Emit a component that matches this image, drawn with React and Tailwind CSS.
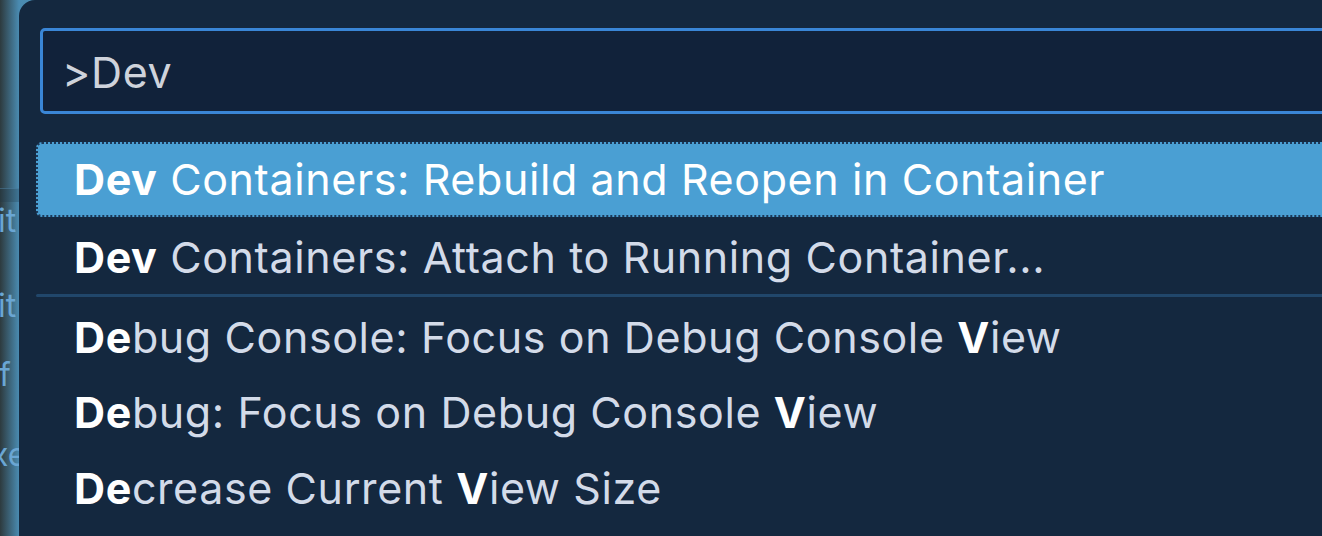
import React from 'react';

// command palette rows; each part is [text, bold]
const rows = [
    { parts: [['Dev', true], [' Containers: Rebuild and Reopen in Container', false]], h: 'h-[75px]', selected: true },
    { parts: [['Dev', true], [' Containers: Attach to Running Container...', false]], h: 'h-[77px] pt-[3px]' },
    { sep: true },
    { parts: [['De', true], ['bug Console: Focus on Debug Console ', false], ['V', true], ['iew', false]], h: 'h-[78px] pt-[2px]' },
    { parts: [['De', true], ['bug: Focus on Debug Console ', false], ['V', true], ['iew', false]], h: 'h-[74px]' },
    { parts: [['De', true], ['crease Current ', false], ['V', true], ['iew Size', false]], h: 'h-[76px] pt-[2px]' },
];

const EditorPeek = () => (
    <div className="w-[19px] shrink-0 overflow-hidden flex flex-col text-[32px] leading-[38px] text-[#6aa6d3] font-['Inter',sans-serif] whitespace-nowrap">
        <div className="h-[188px] shrink-0" />
        <div className="h-[14px] shrink-0 border-t border-[#5a93b8]/40 bg-[#1d3242]/25" />
        <div className="h-[85px] shrink-0 -ml-[2px]">it</div>
        <div className="h-[69px] shrink-0 -ml-[2px]">it</div>
        <div className="h-[80px] shrink-0 -ml-[1px]">f</div>
        <div className="h-[80px] shrink-0 -ml-[9px]">xe</div>
    </div>
);

const Row = ({ row }) => {
    if (row.sep) {
        return <div className="h-[3px] shrink-0 bg-[#21476b] rounded-l-full" />;
    }
    return (
        <div
            className={
                row.selected
                    ? `${row.h} shrink-0 flex items-center pl-[36px] bg-[#4a9fd3] border-2 border-dotted border-[#1c3858] rounded-[6px] text-white`
                    : `${row.h} shrink-0 flex items-center pl-[38px] text-[#d3dbe9]`
            }
        >
            <span className="whitespace-nowrap">
                {row.parts.map(([text, bold], i) => (
                    <span key={i} className={bold ? 'font-bold text-white' : 'font-normal'}>
                        {text}
                    </span>
                ))}
            </span>
        </div>
    );
};

export default function App() {
    return (
        <div className="w-[1322px] h-[536px] overflow-hidden flex bg-[linear-gradient(90deg,#2d3a3e_0px,#4a8bb1_19px,#4b8db3_40px)] font-['Inter',sans-serif]">
            <EditorPeek />

            <div className="flex-1 min-w-0 rounded-tl-[16px] bg-[#14283f] pt-[28px] pl-[17px] flex flex-col">
                {/* quick input */}
                <div className="ml-[4px] -mr-[10px] h-[86px] shrink-0 border-[3px] border-[#3a86d6] rounded-[5px] bg-[#11223a] flex items-center pl-[19px] pt-[2px] text-[43px] tracking-[0.6px] text-[#cfd3db] whitespace-nowrap">
                    &gt;Dev
                </div>

                {/* results */}
                <div className="mt-[28px] -mr-[10px] flex flex-col text-[43px] tracking-[0.6px]">
                    {rows.map((row, i) => (
                        <Row key={i} row={row} />
                    ))}
                </div>
            </div>
        </div>
    );
}
